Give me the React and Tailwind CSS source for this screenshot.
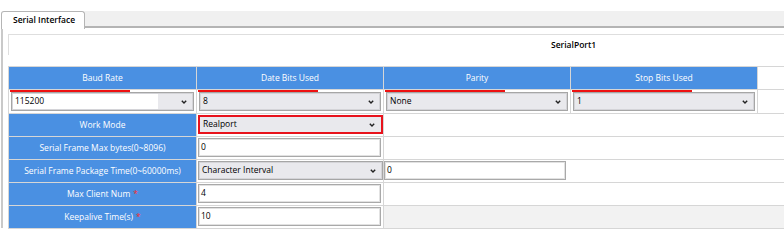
import React from 'react';

const FONT = "font-['Open_Sans',sans-serif]";

/** Small chevron used in the select boxes. */
function Chevron() {
  return (
    <svg width="6" height="4" viewBox="0 0 6 4" className="shrink-0">
      <path d="M0.8 0.8l2.2 2.2 2.2-2.2" fill="none" stroke="#222" strokeWidth="1.4" />
    </svg>
  );
}

function Select({ value, red = false, combo = false }) {
  return (
    <div
      className={
        'relative flex h-[19px] items-center justify-between bg-[#e9e9ed] pl-[3px] pr-[6px] ' +
        (red ? 'border-2 border-[#e8131c]' : 'border border-[#a6a6a6] shadow-[inset_0_0_0_1px_#d4d4d8]')
      }
    >
      {combo ? (
        <div className="absolute left-[1px] top-[1px] bottom-[1px] flex w-[145px] items-center bg-white pl-[2px]">
          {value}
        </div>
      ) : (
        <span>{value}</span>
      )}
      <span />
      <Chevron />
    </div>
  );
}

function Input({ value, w = 'w-[183px]' }) {
  return (
    <div
      className={`flex h-[19px] ${w} items-center border border-[#a9a9a9] bg-white pl-[2px] shadow-[inset_0_0_0_1px_#e2e2e2]`}
    >
      {value}
    </div>
  );
}

function Label({ children, req = false }) {
  return (
    <div className="flex w-[187px] shrink-0 items-center justify-center bg-[#4a90e2] text-white">
      {children}
      {req && <span className="ml-[3px] text-[#ff2a2a]">*</span>}
    </div>
  );
}

const headers = ['Baud Rate', 'Date Bits Used', 'Parity', 'Stop Bits Used'];
const selects = ['115200', '8', 'None', '1'];

export default function App() {
  return (
    <div className={`h-[244px] w-[784px] overflow-hidden bg-white text-[8.5px] text-black ${FONT}`}>
      <div className="h-[11px]" />

      {/* Tab strip */}
      <div className="flex h-[17px] items-start">
        <div className="relative z-10 ml-[1px] flex h-[18px] w-[84px] shrink-0 items-center rounded-t-[3px] border border-b-0 border-[#b5b5b5] bg-white pl-[11px] font-semibold">
          Serial Interface
        </div>
        <div className="h-[17px] flex-1 border-b-2 border-[#b4b4b4] bg-[#f0f0f0]" />
      </div>

      {/* Panel */}
      <div className="ml-[1px] h-[200px] border-l-2 border-[#c9c9c9] pl-[5px] pt-[6px]">
        <div className="flex h-[21px] items-center border-l border-t border-[#dedede] pl-[542px] font-semibold">
          SerialPort1
        </div>
        <div className="h-[11px]" />

        <div className="flex flex-col gap-[1px] border-l border-t border-[#d6d6d6] bg-[#d6d6d6]">
          {/* Header row */}
          <div className="flex h-[22px] gap-[1px]">
            {headers.map((h, i) => (
              <div
                key={h}
                className={
                  'flex shrink-0 items-center justify-center bg-[#4a90e2] text-white ' +
                  (i === 0 ? 'w-[187px]' : 'w-[186px]')
                }
              >
                {h}
              </div>
            ))}
            <div className="flex-1 bg-white" />
          </div>

          {/* Select row */}
          <div className="flex h-[23px] gap-[1px]">
            {selects.map((v, i) => (
              <div
                key={i}
                className={'relative shrink-0 bg-white px-[2px] pt-[2px] ' + (i === 0 ? 'w-[187px]' : 'w-[186px]')}
              >
                <div className="absolute left-[1px] top-0 h-[2px] w-[120px] bg-[#ee1111]" />
                <Select value={v} combo={i === 0} />
              </div>
            ))}
            <div className="flex-1 bg-white" />
          </div>

          {/* Work Mode */}
          <div className="flex h-[22px] gap-[1px]">
            <Label>Work Mode</Label>
            <div className="w-[186px] shrink-0 bg-white pl-[1px] pt-[1px]">
              <Select value="Realport" red />
            </div>
            <div className="flex-1 bg-white" />
          </div>

          {/* Serial Frame Max bytes */}
          <div className="flex h-[22px] gap-[1px]">
            <Label>Serial Frame Max bytes(0~8096)</Label>
            <div className="w-[186px] shrink-0 bg-white pl-[1px] pt-[1px]">
              <Input value="0" />
            </div>
            <div className="flex-1 bg-white" />
          </div>

          {/* Serial Frame Package Time */}
          <div className="flex h-[22px] gap-[1px]">
            <Label>Serial Frame Package Time(0~60000ms)</Label>
            <div className="w-[186px] shrink-0 bg-white pl-[1px] pt-[1px]">
              <Select value="Character Interval" />
            </div>
            <div className="flex-1 bg-white pt-[1px]">
              <Input value="0" w="w-[182px]" />
            </div>
          </div>

          {/* Max Client Num */}
          <div className="flex h-[22px] gap-[1px]">
            <Label req>Max Client Num</Label>
            <div className="w-[186px] shrink-0 bg-white pl-[1px] pt-[1px]">
              <Input value="4" />
            </div>
            <div className="flex-1 bg-white" />
          </div>

          {/* Keepalive Time */}
          <div className="flex h-[22px] gap-[1px]">
            <Label req>Keepalive Time(s)</Label>
            <div className="w-[186px] shrink-0 bg-white pl-[1px] pt-[1px]">
              <Input value="10" />
            </div>
            <div className="flex-1 bg-[#f2f2f2]" />
          </div>
          <div className="h-0" />
        </div>
      </div>
    </div>
  );
}
